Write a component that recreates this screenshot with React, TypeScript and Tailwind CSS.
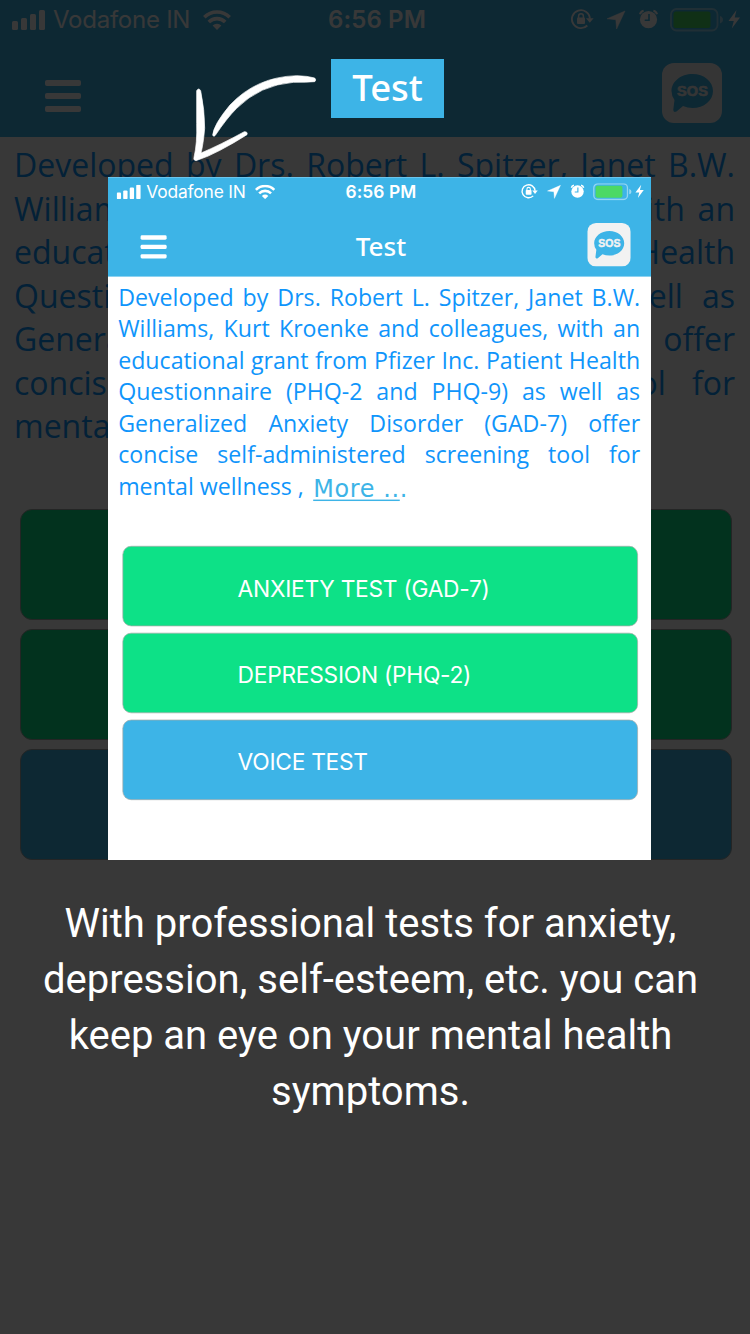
import React from "react";

const introLines = [
  "Developed by Drs. Robert L. Spitzer, Janet B.W.",
  "Williams, Kurt Kroenke and colleagues, with an",
  "educational grant from Pfizer Inc. Patient Health",
  "Questionnaire (PHQ-2 and PHQ-9) as well as",
  "Generalized Anxiety Disorder (GAD-7) offer",
  "concise self-administered screening tool for",
];

const tests = [
  { label: "ANXIETY TEST (GAD-7)", color: "bg-[#0de187]" },
  { label: "DEPRESSION (PHQ-2)", color: "bg-[#0de187]" },
  { label: "VOICE TEST", color: "bg-[#3db4e7]" },
];

function Signal() {
  return (
    <svg width="34" height="20" viewBox="0 0 34 20" fill="white">
      <rect x="0" y="11" width="6" height="9" rx="1.6" />
      <rect x="9" y="8" width="6" height="12" rx="1.6" />
      <rect x="18" y="4" width="6" height="16" rx="1.6" />
      <rect x="27" y="0" width="6" height="20" rx="1.6" />
    </svg>
  );
}

function Wifi() {
  return (
    <svg width="28" height="20" viewBox="0 0 28 20" fill="none" stroke="white" strokeWidth="3.6">
      <path d="M1.3 7.2a18 18 0 0 1 25.4 0" />
      <path d="M5.8 12a11.6 11.6 0 0 1 16.4 0" />
      <path d="M14 20l-4.4-4.4a6.2 6.2 0 0 1 8.8 0z" fill="white" stroke="none" />
    </svg>
  );
}

function StatusIcons() {
  return (
    <svg width="172" height="24" viewBox="570 8 172 24" fill="none">
      <path d="M589.9 18.500A9 9 0 1 0 587.300 25.500" stroke="white" strokeWidth="1.900" />
      <path d="M586 18.200h7.600l-3.800 4.600z" fill="white" />
      <rect x="577" y="17.500" width="8" height="6.500" rx="1" fill="white" />
      <path d="M578.600 18v-1.800a2.400 2.400 0 0 1 4.800 0v1.800" stroke="white" strokeWidth="1.500" />
      <path d="M625 11l-8.400 18-.8-9.300-8.800-.9z" fill="white" stroke="white" strokeWidth=".5" />
      <circle cx="648.500" cy="19.600" r="8.600" fill="white" />
      <path d="M640 14.300a4.500 4.500 0 0 1 3.600-3.500M657 14.300a4.500 4.500 0 0 0-3.600-3.500" stroke="white" strokeWidth="2" />
      <path d="M649 14v6.200h-4.300" stroke="#3db4e7" strokeWidth="1.600" />
      <rect x="671" y="9" width="46.500" height="21.500" rx="5.500" stroke="white" strokeOpacity=".45" strokeWidth="1.800" />
      <rect x="673.500" y="11.500" width="37" height="16.500" rx="2.500" fill="#4cd964" />
      <path d="M720 16q3 1 3 3.700t-3 3.700z" fill="white" fillOpacity=".5" />
      <path d="M736.500 10l-8 11h5.300l-2 7.500 8.200-11h-5.300z" fill="white" />
    </svg>
  );
}

function SosButton() {
  return (
    <svg width="60" height="60" viewBox="0 0 60 60">
      <rect width="60" height="60" rx="12" fill="#f2f2f2" />
      <path
        d="M30.500 11C42 11 51 18.500 51 28S42 45 30.500 45Q25.500 45 21 43L14.500 48.500Q11 50 11.300 46.500L12.500 37Q9.500 33 9.500 28C9.500 18.500 19 11 30.500 11Z"
        fill="#3db4e7"
      />
      <text
        x="30.500"
        y="32.800"
        textAnchor="middle"
        textLength="31"
        lengthAdjust="spacing"
        strokeWidth=".6"
        className="fill-[#f2f2f2] stroke-[#f2f2f2] font-['Liberation_Sans',sans-serif] text-[14.5px] font-bold"
      >
        SOS
      </text>
    </svg>
  );
}

function TestScreen() {
  return (
    <div className="h-[1334px] w-[750px] bg-white">
      <header className="h-[137px] bg-[#3db4e7] text-white">
        <div className="grid h-10 grid-cols-[1fr_auto_1fr] items-center pr-2 pl-3 font-['Inter',sans-serif] text-[24px] leading-10">
          <div className="flex items-center">
            <Signal />
            <span className="ml-[7px] w-[150px] tracking-[-0.25px]">Vodafone IN</span>
            <Wifi />
          </div>
          <span className="font-semibold tracking-[0.1px]">6:56 PM</span>
          <div className="flex justify-end">
            <StatusIcons />
          </div>
        </div>
        <div className="grid grid-cols-[60px_1fr_60px] items-center pt-[23px] pr-7 pl-[45px]">
          <div className="flex flex-col gap-[7.5px] pt-[6px]">
            <i className="h-[5.5px] w-9 rounded-xs bg-white" />
            <i className="h-[5.5px] w-9 rounded-xs bg-white" />
            <i className="h-[5.5px] w-9 rounded-xs bg-white" />
          </div>
          <h1 className="pt-1 pr-[13px] text-center font-['Noto_Sans',sans-serif] text-[36px] leading-[50px] font-medium">Test</h1>
          <SosButton />
        </div>
      </header>
      <div className="h-[372px] pt-[6px] pr-[15px] pl-[14px] font-['Open_Sans',sans-serif] text-[32px] leading-[43.5px] text-[#0f95fb]">
        {introLines.map((line) => (
          <p key={line} className="whitespace-nowrap [text-align-last:justify]">
            {line}
          </p>
        ))}
        <p className="flex items-baseline whitespace-nowrap">
          mental wellness ,
          <a className="relative top-[3px] ml-[13px] font-['DejaVu_Sans',sans-serif] text-[33px] tracking-[0.9px] text-[#3db4e7]">
            <span className="underline decoration-2 underline-offset-4">More ..</span>.
          </a>
        </p>
      </div>
      <div className="flex flex-col gap-[9px] pr-[18px] pl-5">
        {tests.map((test) => (
          <div
            key={test.label}
            className={`flex h-[111px] items-center rounded-xl border border-[#a5aaa7] pt-[6px] pl-[158px] font-['Inter',sans-serif] text-[31.5px] tracking-[-0.4px] text-white ${test.color}`}
          >
            {test.label}
          </div>
        ))}
      </div>
    </div>
  );
}

function HandArrow() {
  return (
    <svg className="absolute top-[50px] left-[180px]" width="150" height="120" viewBox="0 0 450 360" fill="white">
      <path
        d="M50 122Q56 112 62 122Q74 180 74 235Q70 282 63 309Q120 285 193 245Q204 245 201 254Q160 280 120 301Q85 320 48 332Q39 331 42 322Q52 280 50 220Z"
        stroke="white"
        strokeWidth="2"
      />
      <path
        d="M98 256Q100 225 150 165Q230 80 350 77Q385 78 404 84Q410 90 404 95Q380 97 340 97Q240 105 170 175Q140 205 106 256Q102 262 98 256Z"
        stroke="white"
        strokeWidth="2"
      />
    </svg>
  );
}

export default function App() {
  return (
    <div className="relative h-[1334px] w-[750px] overflow-hidden bg-white">
      <TestScreen />
      <div className="absolute inset-0 bg-black/78" />
      <div className="absolute inset-0 flex flex-col pt-[59px]">
        <div className="ml-[331px] h-[59px] w-[113px] bg-[#3db4e7] text-center font-['Noto_Sans',sans-serif] text-[36.5px] leading-[57px] font-medium text-white">
          Test
        </div>
        <div className="mt-[59px] ml-[108px] h-[683px] w-[543px] overflow-hidden bg-[#3db4e7]">
          <div className="h-[1334px] w-[750px] origin-top-left translate-y-[0.4px] scale-[0.724]">
            <TestScreen />
          </div>
        </div>
        <p className="mt-9 w-[741px] text-center font-['Roboto',sans-serif] text-[40px] leading-[56px] text-white">
          With professional tests for anxiety,
          <br />
          depression, self-esteem, etc. you can
          <br />
          keep an eye on your mental health
          <br />
          symptoms.
        </p>
      </div>
      <HandArrow />
    </div>
  );
}
